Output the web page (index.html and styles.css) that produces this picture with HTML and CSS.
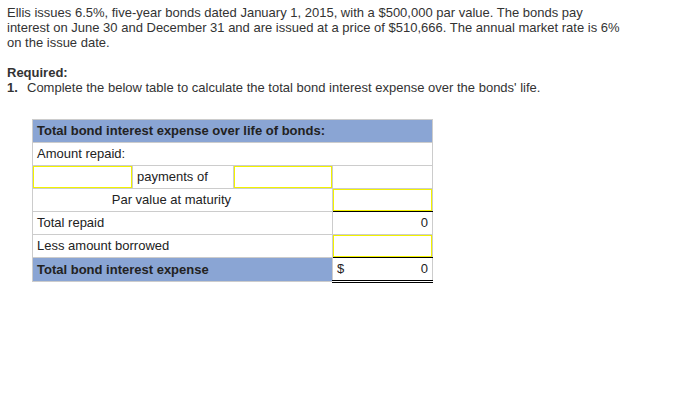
FILE: index.html
```html
<!DOCTYPE html>
<html>
<head>
<meta charset="utf-8">
<link rel="stylesheet" href="styles.css">
</head>
<body>
<div class="page">
  <p class="intro">Ellis issues 6.5%, five-year bonds dated January 1, 2015, with a $500,000 par value. The bonds pay<br>interest on June 30 and December 31 and are issued at a price of $510,666. The annual market rate is 6%<br>on the issue date.</p>
  <div class="required">
    <div class="req-title">Required:</div>
    <div class="req-item"><span class="num">1.</span><span>Complete the below table to calculate the total bond interest expense over the bonds' life.</span></div>
  </div>
  <table class="calc">
    <colgroup>
      <col class="c1"><col class="c2"><col class="c3"><col class="c4">
    </colgroup>
    <tr class="head"><td colspan="4">Total bond interest expense over life of bonds:</td></tr>
    <tr><td colspan="4">Amount repaid:</td></tr>
    <tr>
      <td class="in"><div class="box"></div></td>
      <td>payments of</td>
      <td class="in"><div class="box"></div></td>
      <td></td>
    </tr>
    <tr>
      <td colspan="3" class="par">Par value at maturity</td>
      <td class="in sub"><div class="box"></div></td>
    </tr>
    <tr>
      <td colspan="3">Total repaid</td>
      <td class="num-cell top-black">0</td>
    </tr>
    <tr>
      <td colspan="3">Less amount borrowed</td>
      <td class="in sub"><div class="box"></div></td>
    </tr>
    <tr class="total">
      <td colspan="3" class="blue">Total bond interest expense</td>
      <td class="num-cell final top-black"><span>$</span><span>0</span></td>
    </tr>
  </table>
</div>
</body>
</html>
```

FILE: styles.css
```css
html, body {
  margin: 0;
  padding: 0;
  background: #ffffff;
}

body {
  font-family: "Liberation Sans", Arial, sans-serif;
  font-size: 13px;
  color: #333333;
}

.page {
  padding: 5px 7px;
}

.intro {
  margin: 0;
  line-height: 15px;
  white-space: nowrap;
}

.required {
  margin-top: 15px;
}

.req-title {
  font-weight: bold;
  line-height: 15px;
}

.req-item {
  display: flex;
  line-height: 16px;
}

.req-item .num {
  font-weight: bold;
  width: 20px;
  flex: none;
}

.calc {
  margin: 23px 0 0 25px;
  border-collapse: collapse;
  table-layout: fixed;
  width: 401px;
  color: #222222;
}

.c1 { width: 100px; }
.c2 { width: 101px; }
.c3 { width: 99px; }
.c4 { width: 100px; }

.calc td {
  border: 1px solid #cccccc;
  padding: 0 4px;
  height: 22px;
  line-height: 22px;
  white-space: nowrap;
  overflow: hidden;
}

.calc tr.head td {
  background: #8aa5d4;
  font-weight: bold;
}

.calc td.in {
  padding: 0;
}

.box {
  box-sizing: border-box;
  height: 22px;
  border: 1px solid #f2f200;
  background: #ffffff;
}

.calc td.par {
  text-align: right;
  padding-right: 101px;
}

.calc td.sub {
  border-bottom: 1px solid #000000;
}

.calc td.top-black {
  border-top: 1px solid #000000;
}

.calc td.num-cell {
  text-align: right;
}

.calc td.blue {
  background: #8aa5d4;
  font-weight: bold;
}

.calc td.final {
  border-bottom: 3px double #000000;
}

.final span:first-child {
  float: left;
}
```
